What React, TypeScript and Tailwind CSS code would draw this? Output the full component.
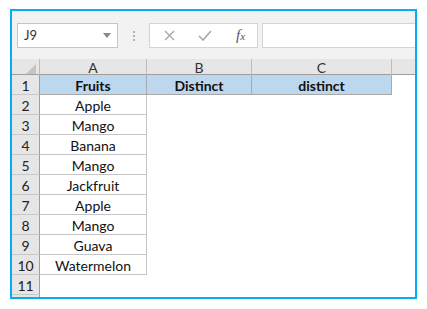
import { Fragment } from 'react';

const fruits = ['Apple', 'Mango', 'Banana', 'Mango', 'Jackfruit', 'Apple', 'Mango', 'Guava', 'Watermelon'];

const gridCols = 'grid grid-cols-[28px_107px_105px_140px_1fr]';
const rowHead = 'bg-[#e6e6e6] border-r border-b border-r-[#9e9e9e] border-b-[#c8c8c8] flex items-center justify-center pt-[2px] text-[#222]';

export default function App() {
  return (
    <div className="w-[427px] h-[309px] bg-white pt-[9px] pl-[10px] font-['Lato',sans-serif]">
      <div className="w-[407px] h-[290px] border-2 border-[#00b0f0] overflow-hidden flex flex-col bg-white">
        {/* Formula bar */}
        <div className="h-[48px] shrink-0 bg-[#f2f2f2] flex items-start pt-[12px] pl-[5px]">
          <div className="w-[101px] h-[25px] bg-white border border-[#c6c6c6] flex items-center justify-between pl-[6px] pr-[6px]">
            <span className="text-[13px] text-[#333] pt-[1px]">J9</span>
            <svg width="8" height="5" viewBox="0 0 8 5">
              <path d="M0 0 L8 0 L4 5 Z" fill="#8a8a8a" />
            </svg>
          </div>
          <div className="w-[31px] h-[25px] flex items-center justify-center">
            <svg width="2" height="10" viewBox="0 0 2 10">
              <rect x="0" y="0" width="2" height="2" fill="#b0b0b0" />
              <rect x="0" y="4" width="2" height="2" fill="#b0b0b0" />
              <rect x="0" y="8" width="2" height="2" fill="#b0b0b0" />
            </svg>
          </div>
          <div className="w-[109px] h-[25px] bg-white border border-[#d4d4d4] flex items-center">
            <div className="w-[38px] flex justify-center">
              <svg width="11" height="11" viewBox="0 0 11 11">
                <path d="M1 1 L10 10 M10 1 L1 10" stroke="#a8a8a8" strokeWidth="1.4" />
              </svg>
            </div>
            <div className="w-[34px] flex justify-center">
              <svg width="14" height="11" viewBox="0 0 14 11">
                <path d="M1 6 L5 10 L13 1" stroke="#a8a8a8" strokeWidth="1.6" fill="none" />
              </svg>
            </div>
            <div className="w-[34px] flex justify-center pl-[3px]">
              <span className="text-[15px] italic text-[#555] font-['Liberation_Serif',serif]">
                f<span className="text-[11px]">x</span>
              </span>
            </div>
          </div>
          <div className="ml-[4px] flex-1 h-[25px] bg-white border border-[#d4d4d4] border-r-0" />
        </div>

        {/* Column headers */}
        <div className={`${gridCols} h-[16px] shrink-0 bg-[#e6e6e6] border-b border-[#9e9e9e] text-[14px] text-[#333] leading-[17px]`}>
          <div className="border-r border-[#bdbdbd] flex items-end justify-end pr-[3px] pb-[2px]">
            <svg width="10" height="10" viewBox="0 0 10 10">
              <path d="M10 0 L10 10 L0 10 Z" fill="#c4c4c4" />
            </svg>
          </div>
          <div className="border-r border-[#bdbdbd] text-center">A</div>
          <div className="border-r border-[#bdbdbd] text-center">B</div>
          <div className="border-r border-[#bdbdbd] text-center">C</div>
          <div />
        </div>

        {/* Rows */}
        <div className={`${gridCols} auto-rows-[20px] text-[14px] text-[#111]`}>
          <div className={rowHead}>1</div>
          <div className="bg-[#bdd7ee] border-r border-b border-[#a9a9a9] flex items-center justify-center pt-[2px] font-bold">Fruits</div>
          <div className="bg-[#bdd7ee] border-r border-b border-[#a9a9a9] flex items-center justify-center pt-[2px] font-bold">Distinct</div>
          <div className="bg-[#bdd7ee] border-r border-b border-[#a9a9a9] flex items-center justify-center pt-[2px] font-bold">distinct</div>
          <div />
          {fruits.map((f, i) => (
            <Fragment key={i}>
              <div className={rowHead}>{i + 2}</div>
              <div className="border-r border-b border-[#c6c6c6] flex items-center justify-center pt-[2px]">{f}</div>
              <div />
              <div />
              <div />
            </Fragment>
          ))}
          <div className={rowHead}>11</div>
          <div />
          <div />
          <div />
          <div />
          <div className="bg-[#e6e6e6] border-r border-[#9e9e9e]" />
        </div>
      </div>
    </div>
  );
}
